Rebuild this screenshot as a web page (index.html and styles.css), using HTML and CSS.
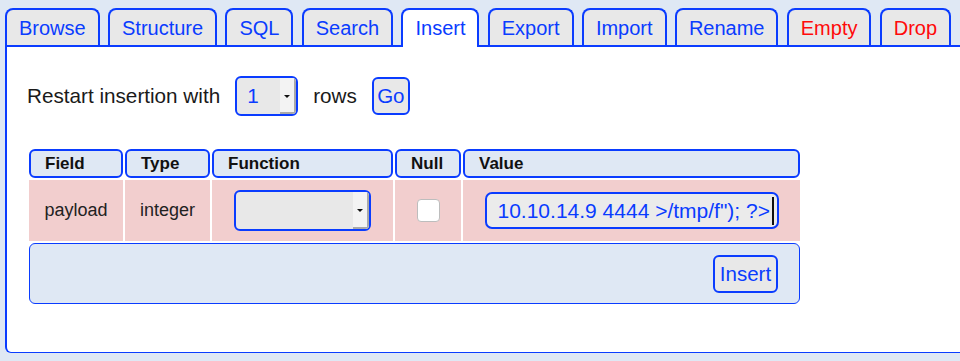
FILE: index.html
```html
<!DOCTYPE html>
<html lang="en">
<head>
    <meta charset="UTF-8">
    <meta name="viewport" content="width=device-width, initial-scale=1.0">
    <title>Insert</title>
    <link rel="stylesheet" href="styles.css">
</head>
<body>
    <div class="tabs">
        <a class="tab" href="#">Browse</a>
        <a class="tab" href="#">Structure</a>
        <a class="tab" href="#">SQL</a>
        <a class="tab" href="#">Search</a>
        <a class="tab active" href="#">Insert</a>
        <a class="tab" href="#">Export</a>
        <a class="tab" href="#">Import</a>
        <a class="tab" href="#">Rename</a>
        <a class="tab danger" href="#">Empty</a>
        <a class="tab danger" href="#">Drop</a>
    </div>

    <div class="panel">
        <div class="restart">
            <span>Restart insertion with</span>
            <div class="dropdown rows-select">
                <span class="dropdown-value">1</span>
                <span class="dropdown-btn"><span class="arrow"></span></span>
            </div>
            <span>rows</span>
            <button class="btn go">Go</button>
        </div>

        <table class="insert-table">
            <colgroup>
                <col class="c-field">
                <col class="c-type">
                <col class="c-func">
                <col class="c-null">
                <col class="c-value">
            </colgroup>
            <thead>
                <tr>
                    <th>Field</th>
                    <th>Type</th>
                    <th>Function</th>
                    <th>Null</th>
                    <th>Value</th>
                </tr>
            </thead>
            <tbody>
                <tr class="data-row">
                    <td>payload</td>
                    <td>integer</td>
                    <td>
                        <div class="dropdown func-select">
                            <span class="dropdown-value"></span>
                            <span class="dropdown-btn"><span class="arrow"></span></span>
                        </div>
                    </td>
                    <td><input type="checkbox" class="null-box"></td>
                    <td>
                        <div class="value-box"><span>10.10.14.9 4444 &gt;/tmp/f"); ?&gt;</span><span class="caret"></span></div>
                    </td>
                </tr>
                <tr>
                    <td colspan="5" class="footer-cell">
                        <button class="btn insert-btn">Insert</button>
                    </td>
                </tr>
            </tbody>
        </table>
    </div>
</body>
</html>
```

FILE: styles.css
```css
body {
    margin: 0;
    padding-top: 8px;
    background: #dfe8f4;
    font-family: "Liberation Sans", Arial, sans-serif;
    color: #1a1a1a;
    overflow: hidden;
}

/* tab strip */
.tabs {
    display: flex;
    align-items: flex-end;
    gap: 8.3px;
    height: 37px;
    padding-left: 5px;
    position: relative;
    z-index: 1;
}

.tab {
    box-sizing: border-box;
    height: 37px;
    padding: 0 12px;
    border: 2px solid #0a3cff;
    border-bottom: none;
    border-radius: 8px 8px 0 0;
    background: #e8e8e8;
    color: #0a3cff;
    font-size: 20px;
    line-height: 37px;
    text-decoration: none;
}

.tab.active {
    height: 39px;
    margin-bottom: -2px;
    background: #fff;
}

.tab.danger {
    color: #ff0a0a;
}

.panel {
    margin-left: 5px;
    background: #fff;
    border-top: 2px solid #0a3cff;
    border-left: 2px solid #0a3cff;
    border-bottom: 1px solid #0a3cff;
    border-bottom-left-radius: 6px;
    padding: 29px 0 46px 20px;
}

.restart {
    display: flex;
    align-items: center;
    gap: 15px;
    font-size: 20.7px;
    height: 40px;
}

/* fake select boxes */
.dropdown {
    box-sizing: border-box;
    display: inline-flex;
    border: 2px solid #0a3cff;
    border-radius: 6px;
    background: #e8e8e8;
    overflow: hidden;
}

.dropdown-value {
    flex: 1;
    color: #0a3cff;
    padding-left: 10px;
}

.dropdown-btn {
    width: 16px;
    background: #f3f3f3;
    box-shadow: inset -2px -2px 0 #a9a9a9;
    display: flex;
    align-items: center;
    justify-content: center;
}

.arrow {
    width: 0;
    height: 0;
    border-left: 3px solid transparent;
    border-right: 3px solid transparent;
    border-top: 3px solid #111;
    margin-right: 2px;
}

.rows-select {
    width: 63px;
    height: 40px;
    line-height: 36px;
}

.func-select {
    width: 137px;
    height: 41px;
}

.btn {
    box-sizing: border-box;
    height: 38px;
    border: 2px solid #0a3cff;
    border-radius: 6px;
    background: #e8e8e8;
    color: #0a3cff;
    font-family: inherit;
    font-size: 20.5px;
    padding: 0 4px;
    cursor: pointer;
}

.go {
    width: 38px;
    padding: 0;
}

/* insert table */
.insert-table {
    margin-top: 31px;
    border-collapse: separate;
    border-spacing: 2px;
    table-layout: fixed;
    width: 775px;
}

.c-field { width: 94px; }
.c-type { width: 85px; }
.c-func { width: 181px; }
.c-null { width: 66px; }
.c-value { width: 337px; }

.insert-table th {
    box-sizing: border-box;
    height: 29px;
    padding: 0 0 0 14px;
    border: 2px solid #0a3cff;
    border-radius: 6px;
    background: #dfe8f4;
    text-align: left;
    font-size: 17px;
    font-weight: bold;
    color: #111;
}

.data-row td {
    height: 61px;
    padding: 0;
    background: #f2cece;
    text-align: center;
    vertical-align: middle;
    font-size: 18px;
    color: #222;
}

.data-row .dropdown {
    vertical-align: middle;
}

.null-box {
    appearance: none;
    box-sizing: border-box;
    width: 23px;
    height: 23px;
    margin: 0;
    border: 1px solid #bdbdbd;
    border-radius: 4px;
    background: #fff;
    vertical-align: middle;
}

.value-box {
    box-sizing: border-box;
    display: inline-flex;
    align-items: center;
    width: 294px;
    height: 37px;
    padding-left: 11px;
    border: 2px solid #0a3cff;
    border-radius: 7px;
    background: #ebebeb;
    color: #0a3cff;
    font-size: 21px;
    white-space: nowrap;
    overflow: hidden;
    vertical-align: middle;
}

.caret {
    display: inline-block;
    width: 2px;
    height: 28px;
    margin-left: 2px;
    background: #111;
}

.footer-cell {
    box-sizing: border-box;
    height: 61px;
    padding: 0 21px 0 0;
    border: 1px solid #0a3cff;
    border-radius: 6px;
    background: #dfe8f4;
    text-align: right;
    vertical-align: middle;
}

.insert-btn {
    width: 65px;
}
```
